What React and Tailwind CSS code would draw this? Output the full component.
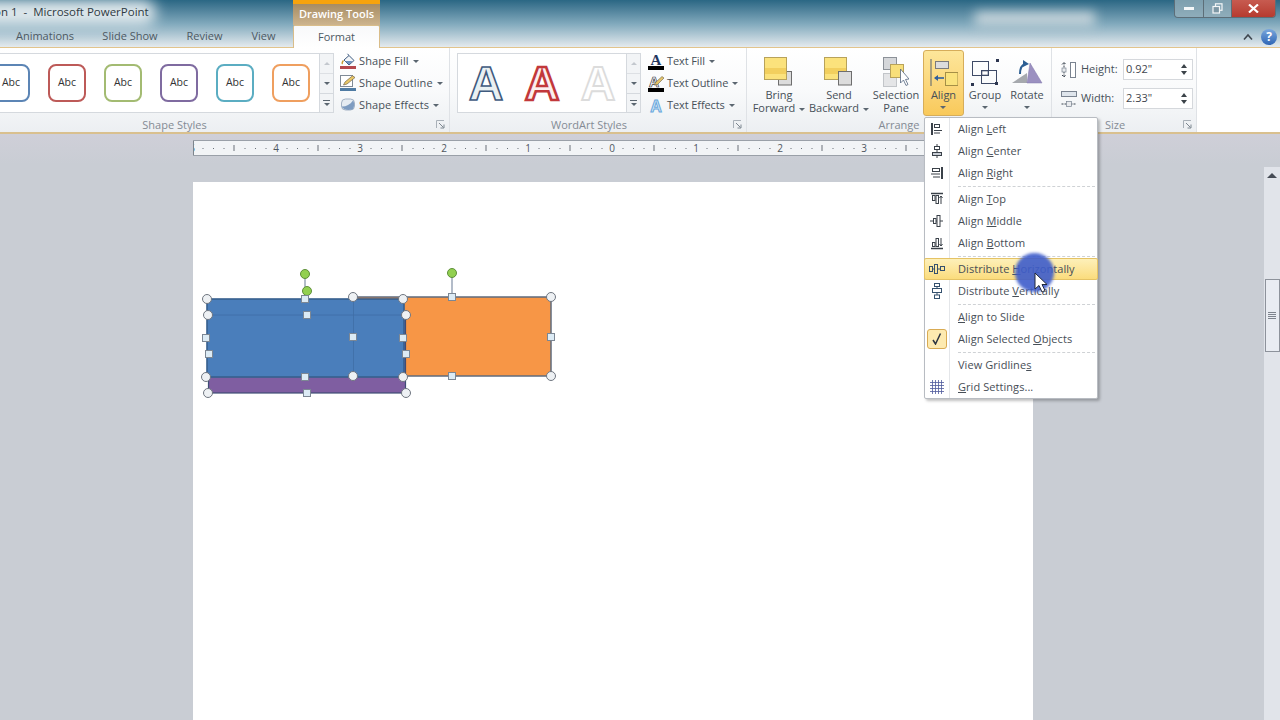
const uiFont = "font-['Open_Sans','Noto_Sans',sans-serif]";

const Caret = ({ className = '' }) => (
  <span className={`inline-block w-0 h-0 border-x-[3px] border-x-transparent border-t-[3px] border-t-[#5b6670] ${className}`} />
);

const Launcher = () => (
  <svg width="9" height="9" viewBox="0 0 9 9" className="shrink-0">
    <path d="M0.5 8V0.5H8" fill="none" stroke="#a9b0b8" />
    <path d="M3 3L7.5 7.5M8 4.5V8H4.5" fill="none" stroke="#7d8790" />
  </svg>
);

const GroupLabel = ({ children, launcher = true }) => (
  <div className="h-[19px] pt-[4px] flex items-center">
    <div className="flex-1 text-center text-[11px] text-[#848b94] leading-none">{children}</div>
    {launcher && <div className="w-[18px] flex justify-end pr-[4px]"><Launcher /></div>}
  </div>
);

const ScrollButtons = () => (
  <div className="w-[14px] h-full flex flex-col border-l border-[#d5d9de] bg-[#f2f4f6]">
    <div className="h-[20px] flex items-center justify-center border-b border-[#dde0e4]">
      <span className="w-0 h-0 border-x-[3px] border-x-transparent border-b-[3px] border-b-[#c3c8ce]" />
    </div>
    <div className="h-[20px] flex items-center justify-center border-b border-[#d5d9de]">
      <Caret />
    </div>
    <div className="flex-1 flex flex-col items-center justify-center gap-[2px]">
      <span className="w-[7px] h-px bg-[#5b6670]" />
      <Caret />
    </div>
  </div>
);

const swatches = ['#5c85b5', '#bd5a58', '#a3bb72', '#7f6ba0', '#5badc2', '#ef9f5f'];

const Swatch = ({ color }) => (
  <svg width="38" height="38" viewBox="0 0 38 38" className="shrink-0">
    <rect x="1" y="1" width="36" height="36" rx="7" fill="#fff" stroke={color} strokeWidth="2" />
    <text x="19" y="21.5" textAnchor="middle" fontSize="10.5" fill="#333" fontFamily="'Open Sans', sans-serif">Abc</text>
  </svg>
);

const BucketIcon = () => (
  <svg width="16" height="16" viewBox="0 0 16 16">
    <path d="M4 7L9 2.5L14 7.5L9 12Z" fill="#f4f6f8" stroke="#3d5a80" />
    <path d="M9 2.5L7.5 0.8" stroke="#3d5a80" />
    <path d="M3.5 7.5C2 9 2 10.5 2.6 11" stroke="#c79a2f" strokeWidth="1.5" fill="none" />
    <path d="M5 8H12.5L9 11.5Z" fill="#6c90bd" />
    <rect x="0" y="13" width="16" height="3" fill="#b5484c" />
  </svg>
);

const PencilIcon = () => (
  <svg width="16" height="16" viewBox="0 0 16 16">
    <rect x="0.5" y="0.5" width="12" height="11" fill="#fff" stroke="#7f8a96" />
    <path d="M3.5 10L5 7L12.5 0.8L15 2.5L7 9Z" fill="#e8c766" stroke="#75664a" strokeWidth="0.7" />
    <rect x="0" y="13" width="16" height="3" fill="#4f7ba3" />
  </svg>
);

const EffectsIcon = () => (
  <svg width="16" height="16" viewBox="0 0 16 16">
    <rect x="1.5" y="2" width="13" height="11" rx="4" fill="#e6ecf2" stroke="#a4b2c4" />
    <path d="M1.5 9.5C5 10 10 8 13 3.5C14.5 5 14.5 10 13 12C10 13.5 4 13.5 1.5 9.5Z" fill="#7e9cc1" />
  </svg>
);

const TextFillIcon = () => (
  <svg width="16" height="17" viewBox="0 0 16 17">
    <text x="8" y="11.5" textAnchor="middle" fontSize="15" fontWeight="700" fill="#23365f" fontFamily="'Liberation Serif', serif">A</text>
    <rect x="0" y="13" width="16" height="4" fill="#000" />
  </svg>
);

const TextOutlineIcon = () => (
  <svg width="16" height="17" viewBox="0 0 16 17">
    <text x="6" y="12" textAnchor="middle" fontSize="14" fontWeight="700" fill="#fff" stroke="#2f3542" strokeWidth="0.7" fontFamily="'Liberation Sans', sans-serif">A</text>
    <path d="M6 10L8 7L14 1.5L16 3L9.5 9.5Z" fill="#e3c46a" stroke="#6d6147" strokeWidth="0.6" />
    <rect x="0" y="13" width="16" height="4" fill="#000" />
  </svg>
);

const TextEffectsIcon = () => (
  <svg width="16" height="17" viewBox="0 0 16 17" className="overflow-visible">
    <text x="8" y="14.5" textAnchor="middle" fontSize="16" fontWeight="700" fill="#d4e7f7" stroke="#68a7dc" strokeWidth="1" fontFamily="'Liberation Sans', sans-serif">A</text>
  </svg>
);

const Command = ({ icon, label, tight }) => (
  <div className="h-[22px] flex items-center gap-[3px]">
    <div className="w-4 flex justify-center shrink-0">{icon}</div>
    <span className={`text-[11px] text-[#475058] whitespace-nowrap ${tight ? 'tracking-[-0.1px]' : 'tracking-[0.1px]'}`}>{label}</span>
    <Caret className="ml-[1px]" />
  </div>
);

const WordArtA = ({ fill, stroke, width = 1.6 }) => (
  <svg width="44" height="56" viewBox="0 0 44 56" className="shrink-0">
    <text x="22" y="45" textAnchor="middle" fontSize="48" fontWeight="700" fill={fill} stroke={stroke} strokeWidth={width} fontFamily="'Liberation Sans', sans-serif">A</text>
  </svg>
);

const BringForwardIcon = () => (
  <svg width="30" height="30" viewBox="0 0 30 30">
    <rect x="14.5" y="14.5" width="13" height="13.5" fill="#dcdcdc" stroke="#6d6d6d" />
    <rect x="0.5" y="0.5" width="22" height="22" fill="#fbe27c" stroke="#b8a25a" />
    <rect x="1" y="11" width="21" height="6" fill="#f2cf5e" />
  </svg>
);

const SendBackwardIcon = () => (
  <svg width="30" height="30" viewBox="0 0 30 30">
    <rect x="0.5" y="0.5" width="22" height="22" fill="#fbe27c" stroke="#b8a25a" />
    <rect x="1" y="11" width="21" height="6" fill="#f2cf5e" />
    <rect x="14.5" y="14.5" width="13" height="13.5" fill="#dcdcdc" stroke="#6d6d6d" />
  </svg>
);

const SelectionPaneIcon = () => (
  <svg width="26" height="30" viewBox="0 0 26 30">
    <rect x="0.5" y="0.5" width="13" height="12" fill="#d5d7da" stroke="#8c9198" />
    <rect x="0.5" y="16.5" width="13" height="13" fill="#e4e5e7" stroke="#c2c5c9" />
    <rect x="7.5" y="7.5" width="13" height="13" fill="#f8df7a" stroke="#b8a25a" />
    <path d="M17.5 12V26L20.5 23L23 28.5L25 27.5L22.5 22.5L26 22Z" fill="#fff" stroke="#53657f" strokeWidth="0.8" />
  </svg>
);

const AlignIcon = () => (
  <svg width="28" height="28" viewBox="0 0 28 28">
    <path d="M1 0V27" stroke="#54606f" />
    <rect x="5.5" y="2.5" width="13" height="7" fill="#dcdcdc" stroke="#7b7b7b" />
    <rect x="15.5" y="13.5" width="12.5" height="13" fill="#fae27c" stroke="#a58f46" />
    <path d="M5 19H14" stroke="#2f5f9e" strokeWidth="1.6" />
    <path d="M4 19L8 16V22Z" fill="#2f5f9e" />
  </svg>
);

const GroupIcon = () => (
  <svg width="30" height="28" viewBox="0 0 30 28">
    <rect x="2.5" y="2.5" width="16" height="14" fill="none" stroke="#3e4a66" />
    <rect x="11.5" y="11.5" width="15" height="13" fill="none" stroke="#3e4a66" />
    <rect x="12" y="12" width="6" height="4" fill="#fff" stroke="#3e4a66" strokeWidth="0.6" />
    <rect x="26" y="0" width="3" height="3" fill="#2d3650" />
    <rect x="1" y="24" width="3" height="3" fill="#2d3650" />
    <rect x="25" y="23" width="3" height="3" fill="#2d3650" />
  </svg>
);

const RotateIcon = () => (
  <svg width="32" height="28" viewBox="0 0 32 28">
    <path d="M1 24L16 14V24Z" fill="#a6a9ae" />
    <path d="M19 4L31 24H16Z" fill="#9b90c0" stroke="#8278ad" strokeWidth="0.5" />
    <path d="M9 15C9 9 11 6 14 5" fill="none" stroke="#2c5e93" strokeWidth="2" />
    <path d="M12 1L18 5L12 8Z" fill="#2c5e93" />
  </svg>
);

const BigButton = ({ width, icon, lines, caret, active, iconHeight = 'h-[37px]' }) => (
  <div className={`${width} h-[66px] mt-[2px] flex flex-col items-center shrink-0 ${active ? 'bg-gradient-to-b from-[#fde69a] to-[#f9c95a] border border-[#d6ad5a] rounded-[3px]' : ''}`}>
    <div className={`${iconHeight} flex items-end justify-center w-full`}>{icon}</div>
    <div className="mt-[1px] text-[11px] leading-[13px] text-[#475058] text-center whitespace-nowrap">
      <div>{lines[0]}</div>
      {lines[1] ? (
        <div>
          {lines[1]}
          {caret && <Caret className="ml-[4px] align-middle" />}
        </div>
      ) : (
        <div className="h-[13px] flex items-center justify-center"><Caret /></div>
      )}
    </div>
  </div>
);

const HeightIcon = () => (
  <svg width="16" height="16" viewBox="0 0 16 16">
    <path d="M3 0.5V15M1 2.5L3 0.5L5 2.5M1 13L3 15L5 13" fill="none" stroke="#39424e" strokeDasharray="2 1" />
    <rect x="1" y="6" width="4" height="4" fill="#e8eaed" stroke="#7a8390" strokeWidth="0.7" />
    <rect x="9.5" y="0.5" width="5" height="15" fill="#fff" stroke="#7a8390" />
  </svg>
);

const WidthIcon = () => (
  <svg width="16" height="16" viewBox="0 0 16 16">
    <rect x="0.5" y="0.5" width="15" height="5" fill="#dfe5ec" stroke="#7a8390" />
    <path d="M0.5 13H15.5" stroke="#39424e" strokeDasharray="2 1" />
    <rect x="5.5" y="10.5" width="5" height="5" fill="#e8eaed" stroke="#7a8390" strokeWidth="0.7" />
  </svg>
);

const SizeRow = ({ icon, label, value }) => (
  <div className="h-[21px] flex items-center">
    <div className="w-[20px] shrink-0">{icon}</div>
    <div className="w-[42px] text-[11px] text-[#475058]">{label}</div>
    <div className="w-[70px] h-full flex items-center justify-between border border-[#d5d8dc] bg-white pl-[2px] pr-[5px]">
      <span className="text-[11px] text-[#3f464e]">{value}</span>
      <div className="flex flex-col gap-[3px]">
        <span className="w-0 h-0 border-x-[3px] border-x-transparent border-b-[4px] border-b-[#3b4248]" />
        <span className="w-0 h-0 border-x-[3px] border-x-transparent border-t-[4px] border-t-[#3b4248]" />
      </div>
    </div>
  </div>
);

const Header = () => (
  <div className="relative h-12 shrink-0 bg-gradient-to-b from-[#2a6784] via-[#82aabd] to-[#e9edf0] overflow-hidden">
    {/* glow behind the title */}
    <div className="absolute -left-6 top-0 w-[180px] h-[26px] bg-[#dfe8ec] blur-[7px] rounded-r-full" />
    <div className="absolute left-[975px] top-[12px] w-[120px] h-[14px] bg-[#c9d6dc] blur-[6px]" />
    <div className="relative flex h-[25px]">
      <div className="w-[293px] text-[11.5px] leading-[24px] text-[#2f3a42] whitespace-pre -indent-[6px]">on 1  -  Microsoft PowerPoint</div>
      <div className="w-[87px] flex flex-col">
        <div className="h-[4px] bg-[#f6a30d]" />
        <div className="flex-1 bg-gradient-to-b from-[#a68c63] to-[#cdb48e] text-center text-[11px] font-semibold leading-[20px] text-white">Drawing Tools</div>
      </div>
      <div className="ml-auto mr-[4px] w-[102px] h-[18px] flex rounded-b-[4px] border border-t-0 border-[#5d6e78] overflow-hidden">
        <div className="w-[28px] flex items-center justify-center bg-[#9fb6c1]/70"><span className="w-[10px] h-[3px] bg-white/90" /></div>
        <div className="w-[28px] flex items-center justify-center bg-[#9fb6c1]/70 border-l border-[#5d6e78]">
          <svg width="11" height="11" viewBox="0 0 11 11" fill="none" stroke="#f3f6f7" strokeWidth="1.2">
            <rect x="3.5" y="0.8" width="6.5" height="6.5" />
            <rect x="1" y="3.5" width="6.5" height="6.5" fill="#7d97a4" />
          </svg>
        </div>
        <div className="flex-1 flex items-center justify-center bg-gradient-to-b from-[#c75b50] to-[#b63a2f] border-l border-[#5d6e78]">
          <svg width="11" height="9" viewBox="0 0 11 9" fill="none" stroke="#fff" strokeWidth="2.2"><path d="M1 0.5L10 8.5M10 0.5L1 8.5" /></svg>
        </div>
      </div>
    </div>
    <div className="relative flex h-[23px] text-[11px] text-[#4d5963] items-center">
      <div className="w-[90px] text-center">Animations</div>
      <div className="w-[80px] text-center">Slide Show</div>
      <div className="w-[69px] text-center">Review</div>
      <div className="w-[49px] text-center">View</div>
      <div className="ml-[5px] w-[87px] h-full text-center leading-[22px] rounded-t-[2px] border-x border-t border-[#d9bd8a] bg-gradient-to-b from-[#f8f9fa] to-white">Format</div>
      <div className="ml-auto mr-[3px] flex items-center gap-[8px]">
        <svg width="10" height="8" viewBox="0 0 10 8"><path d="M1 6.5L5 2L9 6.5" fill="none" stroke="#3f4750" strokeWidth="1.6" /></svg>
        <div className="w-[16px] h-[16px] rounded-full bg-gradient-to-b from-[#7aa7dc] to-[#2f66b5] text-white text-[12px] font-bold leading-[16px] text-center">?</div>
      </div>
    </div>
    <div className="absolute left-0 bottom-0 w-[293px] h-px bg-[#e2c48c]" />
    <div className="absolute left-[380px] right-0 bottom-0 h-px bg-[#e2c48c]" />
  </div>
);

const Ribbon = () => (
  <div className="h-[86px] shrink-0 flex bg-gradient-to-b from-white via-[#f9fafb] to-[#eceff2] border-b-2 border-[#d9c08e]">
    {/* Shape Styles */}
    <div className="w-[450px] shrink-0 border-r border-[#dfe2e6] flex flex-col">
      <div className="h-[65px] flex">
        <div className="w-[334px] h-[60px] mt-[5px] flex border border-l-0 border-[#d5d9de] bg-white">
          <div className="flex-1 flex items-center gap-[18px] -ml-[8px] overflow-hidden">
            {swatches.map((c) => <Swatch key={c} color={c} />)}
          </div>
          <ScrollButtons />
        </div>
        <div className="ml-[6px] mt-[2px]">
          <Command icon={<BucketIcon />} label="Shape Fill" />
          <Command icon={<PencilIcon />} label="Shape Outline" />
          <Command icon={<EffectsIcon />} label="Shape Effects" />
        </div>
      </div>
      <GroupLabel>
        <span className="pr-[82px]">Shape Styles</span>
      </GroupLabel>
    </div>

    {/* WordArt Styles */}
    <div className="w-[297px] shrink-0 border-r border-[#dfe2e6] flex flex-col">
      <div className="h-[65px] flex">
        <div className="w-[184px] h-[60px] ml-[7px] mt-[5px] flex border border-[#d5d9de] bg-white">
          <div className="flex-1 flex items-center pl-[6px] gap-[12px] overflow-hidden">
            <WordArtA fill="#e9f0f2" stroke="#3f5a7e" />
            <WordArtA fill="#fbeeee" stroke="#c2383b" width={2.6} />
            <WordArtA fill="#fff" stroke="#dcdcdc" width={1.8} />
          </div>
          <ScrollButtons />
        </div>
        <div className="ml-[7px] mt-[2px]">
          <Command tight icon={<TextFillIcon />} label="Text Fill" />
          <Command tight icon={<TextOutlineIcon />} label="Text Outline" />
          <Command tight icon={<TextEffectsIcon />} label="Text Effects" />
        </div>
      </div>
      <GroupLabel>WordArt Styles</GroupLabel>
    </div>

    {/* Arrange */}
    <div className="w-[305px] shrink-0 border-r border-[#dfe2e6] flex flex-col">
      <div className="h-[65px] flex pl-[2px]">
        <BigButton width="w-[60px]" icon={<BringForwardIcon />} lines={['Bring', 'Forward']} caret />
        <BigButton width="w-[60px]" icon={<SendBackwardIcon />} lines={['Send', 'Backward']} caret />
        <BigButton width="w-[54px]" icon={<SelectionPaneIcon />} lines={['Selection', 'Pane']} />
        <BigButton width="w-[41px]" active icon={<AlignIcon />} lines={['Align']} iconHeight="h-[36px]" />
        <BigButton width="w-[42px]" icon={<GroupIcon />} lines={['Group']} />
        <BigButton width="w-[42px]" icon={<RotateIcon />} lines={['Rotate']} />
      </div>
      <GroupLabel launcher={false}>Arrange</GroupLabel>
    </div>

    {/* Size */}
    <div className="w-[145px] shrink-0 border-r border-[#dfe2e6] flex flex-col">
      <div className="h-[65px] pl-[9px] pt-[10px] mt-[1px] flex flex-col gap-[8px]">
        <SizeRow icon={<HeightIcon />} label="Height:" value={'0.92"'} />
        <SizeRow icon={<WidthIcon />} label="Width:" value={'2.33"'} />
      </div>
      <div className="-mt-[1px]">
        <GroupLabel>Size</GroupLabel>
      </div>
    </div>
    <div className="flex-1 bg-white" />
  </div>
);

const rulerTicks = Array.from({ length: 81 }, (_, i) => i - 40);

const Ruler = () => (
  <svg width="840" height="14" viewBox="193 0 840 14" className="block bg-[#f2f4f6] border-y border-[#9aa0a8] box-content">
    {rulerTicks.map((t) => {
      const x = 612 + t * 10.5;
      if (t === 0 || t % 8 === 0) {
        return (
          <text key={t} x={x} y="11" textAnchor="middle" fontSize="10" fill="#4f5760" fontFamily="'Open Sans', sans-serif">
            {Math.abs(t / 8)}
          </text>
        );
      }
      if (t % 4 === 0) return <path key={t} d={`M${x} 4V10`} stroke="#6a7178" />;
      return <rect key={t} x={x} y="7" width="1" height="1" fill="#6a7178" />;
    })}
    <path d="M193.5 0V14" stroke="#7d848c" />
  </svg>
);

const Circle = ({ x, y, r = 4.5 }) => <circle cx={x} cy={y} r={r} fill="#eef1f4" stroke="#6f7680" />;
const Square = ({ x, y }) => <rect x={x - 3.5} y={y - 3.5} width="7" height="7" fill="#dcebf5" stroke="#7c8794" />;
const Rotator = ({ x, y }) => <circle cx={x} cy={y} r="4.5" fill="#92d050" stroke="#5e8f3a" />;

const Shapes = () => (
  <svg width="400" height="230" viewBox="193 182 400 230" className="absolute left-0 top-0">
    {/* orange box */}
    <rect x="353" y="297" width="198" height="79" fill="#f79646" stroke="#5f6b7d" strokeWidth="1.5" />
    {/* purple box */}
    <rect x="208.5" y="316" width="197" height="77" fill="#7f5ea1" stroke="#3f4d75" strokeWidth="1.2" />
    {/* blue box */}
    <rect x="207" y="299" width="197" height="78" fill="#4a7ebb" stroke="#365f8e" strokeWidth="1.6" />
    <path d="M208 315H406M353.5 297V376" stroke="#3f6da6" strokeWidth="0.8" fill="none" />

    <path d="M305 274V299M452 273V297" stroke="#9aa6b8" strokeWidth="1.5" />

    <Rotator x={307} y={291} />
    <Rotator x={305} y={274} />
    <Rotator x={452} y={273} />

    {[[353, 297], [551, 297], [353, 376], [551, 376]].map(([x, y]) => <Circle key={`o${x}${y}`} x={x} y={y} />)}
    {[[208, 315], [406, 315], [208, 393], [406, 393]].map(([x, y]) => <Circle key={`p${x}${y}`} x={x} y={y} />)}
    {[[207, 299], [403, 299], [206, 377], [403, 377]].map(([x, y]) => <Circle key={`b${x}${y}`} x={x} y={y} />)}

    {[[452, 297], [452, 376], [353, 337], [551, 337],
      [307, 315], [307, 393], [209, 354], [406, 354],
      [305, 299], [305, 377], [206, 338], [403, 338]].map(([x, y]) => <Square key={`s${x}${y}`} x={x} y={y} />)}
  </svg>
);

const Scrollbar = () => (
  <div className="absolute right-0 top-[33px] bottom-0 w-4 bg-[#e1e4ea] flex flex-col items-center">
    <div className="h-[16px] flex items-center justify-center">
      <span className="w-0 h-0 border-x-[5px] border-x-transparent border-b-[5px] border-b-[#454b55]" />
    </div>
    <div className="mt-[96px] w-[15px] h-[73px] bg-[#e9ecf2] border border-[#8d929b] flex flex-col items-center justify-center gap-[1px]">
      <span className="w-[8px] h-px bg-[#7e848d]" />
      <span className="w-[8px] h-px bg-[#7e848d]" />
      <span className="w-[8px] h-px bg-[#7e848d]" />
      <span className="w-[8px] h-px bg-[#7e848d]" />
    </div>
  </div>
);

const IcoAlign = ({ d, extra }) => (
  <svg width="14" height="14" viewBox="0 0 14 14" fill="none" stroke="#3a4149">
    <path d={d} />
    {extra}
  </svg>
);

const menuIcons = {
  left: <IcoAlign d="M2 1V13" extra={<><path d="M2 1V13" strokeWidth="2" /><rect x="4.5" y="2.5" width="5" height="3" /><path d="M4 8.5H12M4 11H10" /></>} />,
  center: <IcoAlign d="M7 0V14" extra={<><rect x="4.5" y="2.5" width="5" height="3" fill="#fff" /><rect x="2.5" y="8.5" width="9" height="3" fill="#c9ced6" /></>} />,
  right: <IcoAlign d="M12 1V13" extra={<><path d="M12 1V13" strokeWidth="2" /><rect x="2.5" y="2.5" width="7" height="3" /><path d="M1 8H10M3 11H10" /></>} />,
  top: <IcoAlign d="M1 1.5H13" extra={<><path d="M1 1.5H13" strokeWidth="1.5" /><rect x="2.5" y="3.5" width="2.5" height="5" /><rect x="6" y="3.5" width="2.5" height="8" /><path d="M11 12V4M9.5 6L11 4L12.5 6" /></>} />,
  middle: <IcoAlign d="M0 7H13" extra={<><rect x="3.5" y="4.5" width="2.5" height="5" fill="#fff" /><rect x="7" y="1.5" width="3" height="11" fill="#fff" /></>} />,
  bottom: <IcoAlign d="M1 12.5H13" extra={<><path d="M1 12.5H13" strokeWidth="1.5" /><rect x="2.5" y="6.5" width="2.5" height="4" /><rect x="6" y="2.5" width="2.5" height="8" /><path d="M11 2V10M9.5 8L11 10L12.5 8" /></>} />,
  distH: (
    <svg width="16" height="10" viewBox="0 0 16 10" fill="none" stroke="#35516e">
      <rect x="0.5" y="2.5" width="3" height="5" /><rect x="5.5" y="0.5" width="3" height="9" /><rect x="11.5" y="2.5" width="4" height="4" />
      <path d="M3.5 5H5.5M8.5 5H11.5" />
    </svg>
  ),
  distV: (
    <svg width="10" height="16" viewBox="0 0 10 16" fill="none" stroke="#35516e">
      <rect x="2.5" y="0.5" width="5" height="3" /><rect x="0.5" y="5.5" width="9" height="4" /><rect x="2.5" y="12" width="5" height="3.5" />
      <path d="M5 3.5V5.5M5 9.5V12" />
    </svg>
  ),
  grid: (
    <svg width="14" height="14" viewBox="0 0 14 14" stroke="#4f5a9c" strokeWidth="0.8">
      <path d="M0 2.5H14M0 5.5H14M0 8.5H14M0 11.5H14M2.5 0V14M5.5 0V14M8.5 0V14M11.5 0V14" />
    </svg>
  ),
};

const MenuRow = ({ icon, children, highlight, checked }) => (
  <div className={`h-[22px] flex items-center ${highlight ? 'bg-gradient-to-b from-[#fdf0b9] to-[#fbdc7c] border border-[#e5c365] rounded-[2px] -mx-[1px]' : ''}`}>
    <div className="w-[24px] shrink-0 flex items-center justify-center">
      {checked ? (
        <div className="w-[20px] h-[20px] rounded-[3px] border border-[#d9ab53] bg-[#fdeab0] flex items-center justify-center">
          <svg width="10" height="12" viewBox="0 0 10 12" fill="none" stroke="#2c3440" strokeWidth="1.5"><path d="M1 7L3.5 11L8.5 0.5" /></svg>
        </div>
      ) : icon}
    </div>
    <div className="ml-[9px] text-[11px] tracking-[0.06px] text-[#474e56] whitespace-nowrap">{children}</div>
  </div>
);

const MenuSep = () => (
  <div className="h-[4px] flex items-center pl-[33px] pr-[2px]">
    <div className="w-full border-t border-dashed border-[#cfd2d5]" />
  </div>
);

const AlignMenu = () => (
  <div className="absolute left-[924px] top-[117px] w-[174px] h-[282px] z-10 bg-white border border-[#b8bcc2] rounded-[2px] shadow-[2px_2px_3px_rgba(0,0,0,0.25)]">
    <div className="absolute left-[24px] top-0 bottom-0 w-px bg-[#e4e6e9]" />
    <div className="relative">
      <MenuRow icon={menuIcons.left}>Align <u>L</u>eft</MenuRow>
      <MenuRow icon={menuIcons.center}>Align <u>C</u>enter</MenuRow>
      <MenuRow icon={menuIcons.right}>Align <u>R</u>ight</MenuRow>
      <MenuSep />
      <MenuRow icon={menuIcons.top}>Align <u>T</u>op</MenuRow>
      <MenuRow icon={menuIcons.middle}>Align <u>M</u>iddle</MenuRow>
      <MenuRow icon={menuIcons.bottom}>Align <u>B</u>ottom</MenuRow>
      <MenuSep />
      <MenuRow highlight icon={menuIcons.distH}>Distribute <u>H</u>orizontally</MenuRow>
      <MenuRow icon={menuIcons.distV}>Distribute <u>V</u>ertically</MenuRow>
      <MenuSep />
      <MenuRow><u>A</u>lign to Slide</MenuRow>
      <MenuRow checked>Align Selected <u>O</u>bjects</MenuRow>
      <MenuSep />
      <MenuRow>View Gridline<u>s</u></MenuRow>
      <MenuRow icon={menuIcons.grid}><u>G</u>rid Settings...</MenuRow>
    </div>
  </div>
);

const MouseCursor = () => (
  <div className="absolute left-[1015px] top-[253px] w-[39px] h-[39px] z-20">
    <div className="w-full h-full rounded-full bg-[#3d5ccb]/90 blur-[1.5px]" />
    <svg width="16" height="22" viewBox="0 0 16 22" className="absolute left-[19px] top-[19px]">
      <path d="M1 1V17L5 13.5L8 20L11 18.5L8 12.5H13Z" fill="#fff" stroke="#20293a" strokeWidth="1" />
    </svg>
  </div>
);

const App = () => {
  return (
    <div className={`relative w-[1280px] h-[720px] overflow-hidden flex flex-col bg-[#c9cdd4] ${uiFont}`}>
      <Header />
      <Ribbon />
      <div className="relative flex-1 pl-[193px] pt-[6px] overflow-hidden bg-gradient-to-b from-[#cfcfd8] to-[#c9cdd4] to-[30px]">
        <Ruler />
        <div className="relative w-[840px] h-[600px] mt-[26px] bg-white">
          <Shapes />
        </div>
        <Scrollbar />
      </div>
      <AlignMenu />
      <MouseCursor />
    </div>
  );
};

export default App;
